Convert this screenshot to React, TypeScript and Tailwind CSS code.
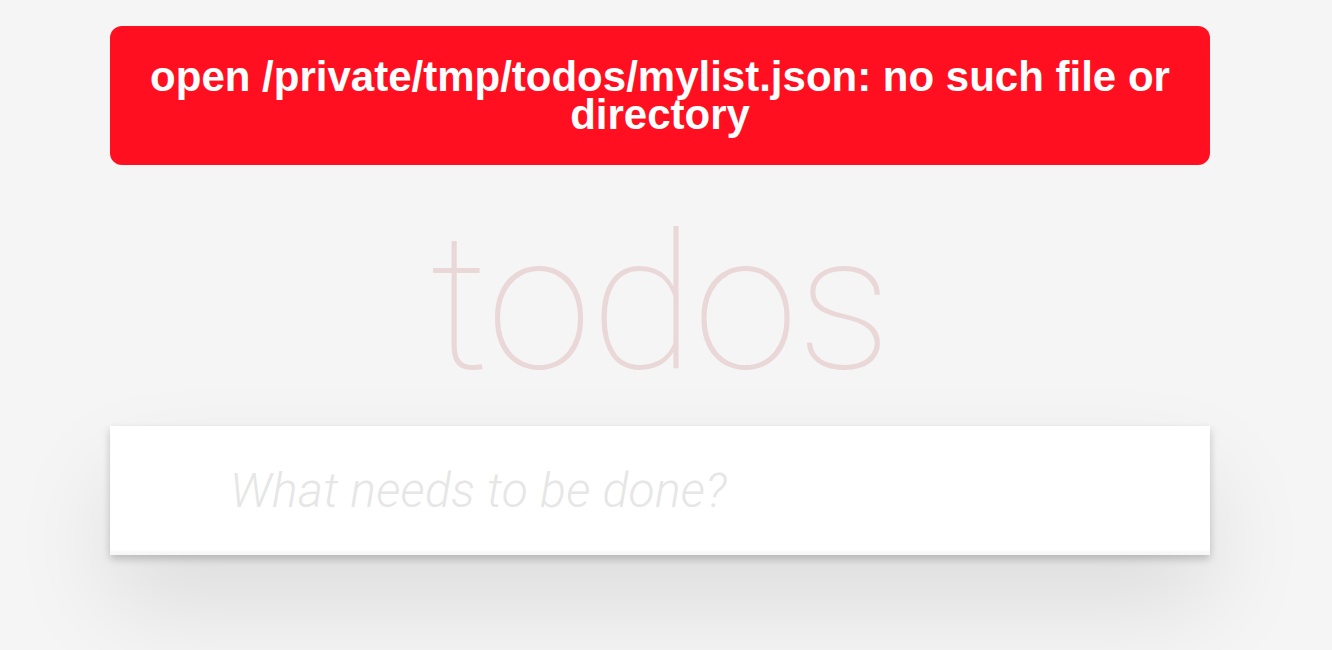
export default function App() {
  return (
    <div className="min-h-screen bg-[#f5f5f5] font-['Helvetica_Neue','Liberation_Sans',Arial,sans-serif] overflow-hidden">
      <div className="w-[1100px] ml-[110px] pt-[26px]">
        {/* error banner */}
        <div className="h-[139px] rounded-[12px] bg-[#ff0f1f] flex items-center justify-center px-8">
          <p className="text-white text-center font-bold text-[42px] leading-[38px]">
            open /private/tmp/todos/mylist.json: no such file or directory
          </p>
        </div>

        {/* title */}
        <h1 className="mt-[38px] h-[223px] text-center text-[190px] leading-[200px] font-thin text-[rgba(175,47,47,0.15)] font-['Roboto',sans-serif] tracking-[-1px]">
          todos
        </h1>

        {/* new todo */}
        <div className="bg-white shadow-[0_4px_8px_0_rgba(0,0,0,0.2),0_50px_100px_0_rgba(0,0,0,0.1)]">
          <input
            className="w-full h-[129px] pl-[120px] pr-8 text-[48px] italic font-light tracking-[0.3px] text-[#4d4d4d] placeholder:text-[#e6e6e6] outline-none bg-transparent shadow-[inset_0_-4px_2px_rgba(0,0,0,0.03)] font-['Roboto',sans-serif]"
            placeholder="What needs to be done?"
          />
        </div>
      </div>
    </div>
  );
}
